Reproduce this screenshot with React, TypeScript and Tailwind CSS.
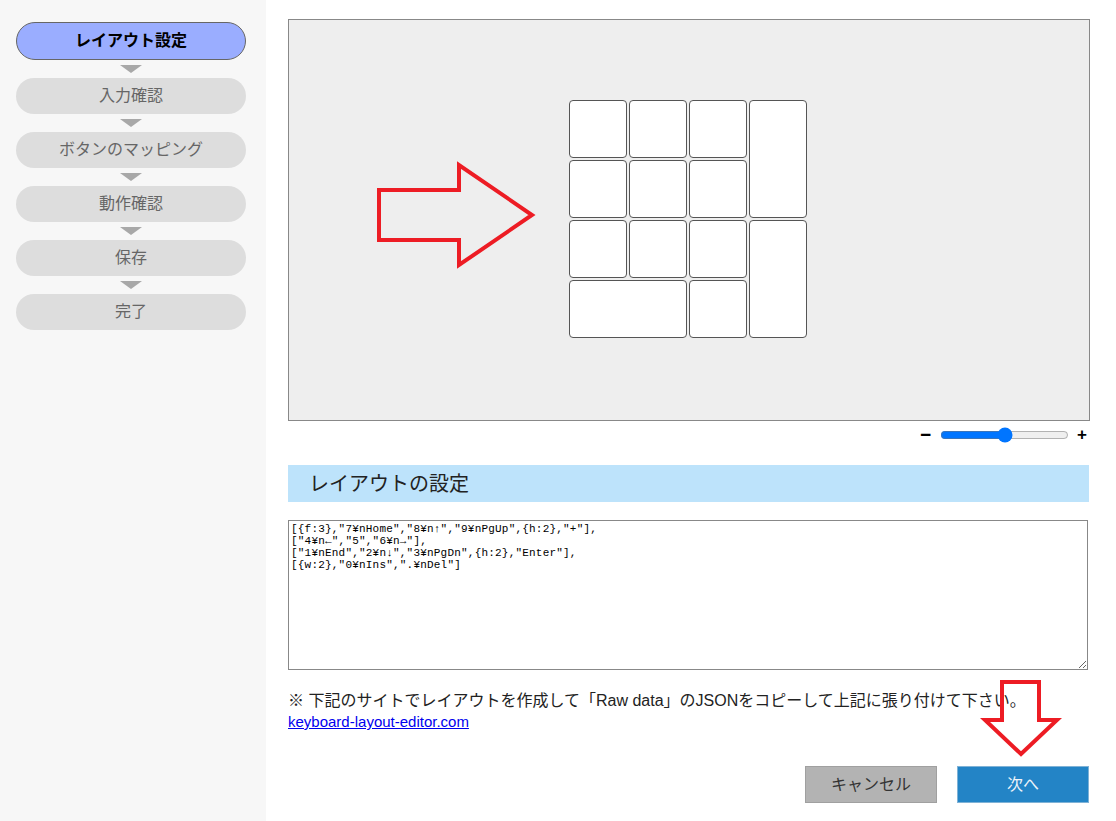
import { useState } from 'react';

const STEPS = ['レイアウト設定', '入力確認', 'ボタンのマッピング', '動作確認', '保存', '完了'];

// numpad layout: [col, row, colSpan, rowSpan]
const KEYS: [number, number, number, number][] = [
  [1, 1, 1, 1], [2, 1, 1, 1], [3, 1, 1, 1], [4, 1, 1, 2],
  [1, 2, 1, 1], [2, 2, 1, 1], [3, 2, 1, 1],
  [1, 3, 1, 1], [2, 3, 1, 1], [3, 3, 1, 1], [4, 3, 1, 2],
  [1, 4, 2, 1], [3, 4, 1, 1],
];

const RAW = `[{f:3},"7¥nHome","8¥n↑","9¥nPgUp",{h:2},"+"],
["4¥n←","5","6¥n→"],
["1¥nEnd","2¥n↓","3¥nPgDn",{h:2},"Enter"],
[{w:2},"0¥nIns",".¥nDel"]`;

export default function App() {
  const [zoom, setZoom] = useState(50);
  const [raw, setRaw] = useState(RAW);

  return (
    <div
      className="relative flex min-h-screen bg-white text-[#222]"
      style={{ fontFamily: '"Liberation Sans", "Noto Sans CJK JP", sans-serif' }}
    >
      {/* Sidebar steps */}
      <aside className="w-[266px] shrink-0 bg-[#f7f7f7] pl-4 pr-5 pt-[22px]">
        <div className="flex flex-col items-center">
          {STEPS.map((s, i) => (
            <div key={s} className="flex w-full flex-col items-center">
              {i > 0 && (
                <div className="my-[5px] h-0 w-0 border-x-[11px] border-t-[8px] border-x-transparent border-t-[#a8a8a8]" />
              )}
              {i === 0 ? (
                <div className="flex h-[38px] w-full items-center justify-center rounded-full border border-[#666] bg-[#9aadff] text-[16px] font-bold text-black">
                  {s}
                </div>
              ) : (
                <div className="flex h-9 w-full items-center justify-center rounded-full bg-[#dddddd] text-[16px] text-[#666]">
                  {s}
                </div>
              )}
            </div>
          ))}
        </div>
      </aside>

      {/* Main */}
      <main className="flex-1 pl-[22px] pr-[27px] pt-[19px]">
        {/* Preview canvas */}
        <div className="relative flex h-[402px] w-[802px] items-center justify-center border border-[#888] bg-[#eeeeee] pb-[2px] pr-[2px]">
          <div className="grid grid-cols-[repeat(4,58px)] grid-rows-[repeat(4,58px)] gap-[2px]">
            {KEYS.map(([c, r, w, h], i) => (
              <div
                key={i}
                className="rounded-[4px] border border-[#555] bg-white"
                style={{ gridColumn: `${c} / span ${w}`, gridRow: `${r} / span ${h}` }}
              />
            ))}
          </div>
          <svg className="pointer-events-none absolute left-0 top-0" width="800" height="400">
            <polygon
              points="90,170 170,170 170,145 243,195 170,245 170,220 90,220"
              fill="none"
              stroke="#ed1c24"
              strokeWidth="4"
              strokeLinejoin="miter"
            />
          </svg>
        </div>

        {/* Zoom slider */}
        <div className="mt-[4px] flex items-center justify-end pr-[3px] font-bold text-black">
          <span className="text-[19px] leading-none">−</span>
          <input
            type="range"
            min={0}
            max={100}
            value={zoom}
            onChange={e => setZoom(Number(e.target.value))}
            className="m-0 ml-[9px] mr-[8px] w-[129px] accent-[#0075ff]"
          />
          <span className="text-[17px] leading-none">+</span>
        </div>

        {/* Section header */}
        <div className="mt-[21px] flex h-[37px] w-[801px] items-center bg-[#bde3fb] pl-[21px] text-[20px] text-[#222]">
          レイアウトの設定
        </div>

        <textarea
          value={raw}
          onChange={e => setRaw(e.target.value)}
          spellCheck={false}
          className="mt-[18px] block h-[150px] w-[800px] border border-[#888] bg-white px-[2px] py-[2px] text-[11px] leading-[12px] tracking-[0.2px] text-black outline-none"
          style={{ fontFamily: '"Liberation Mono", "Noto Sans CJK JP", monospace' }}
        />

        <p className="mt-[21px] text-[16px] leading-[20px] text-[#222]">
          ※ 下記のサイトでレイアウトを作成して「Raw data」のJSONをコピーして上記に張り付けて下さい。
        </p>
        <a href="#" className="block w-fit text-[15px] leading-[22px] text-[#0000ee] underline">
          keyboard-layout-editor.com
        </a>

        <div className="mt-[33px] flex justify-end gap-[20px] pr-[1px]">
          <button className="h-[37px] w-[132px] border border-[#a0a0a0] bg-[#b3b3b3] text-[16px] text-[#333]">
            キャンセル
          </button>
          <button className="h-[37px] w-[132px] border border-[#7fb2d6] bg-[#2384c6] text-[16px] text-[#eef4fa]">
            次へ
          </button>
        </div>
      </main>

      {/* annotation arrow pointing at the next button */}
      <svg className="pointer-events-none absolute left-[980px] top-[678px]" width="82" height="82">
        <polygon
          points="22,4 59,4 59,42 77,42 41,76 5,42 22,42"
          fill="none"
          stroke="#ed1c24"
          strokeWidth="4"
        />
      </svg>
    </div>
  );
}
